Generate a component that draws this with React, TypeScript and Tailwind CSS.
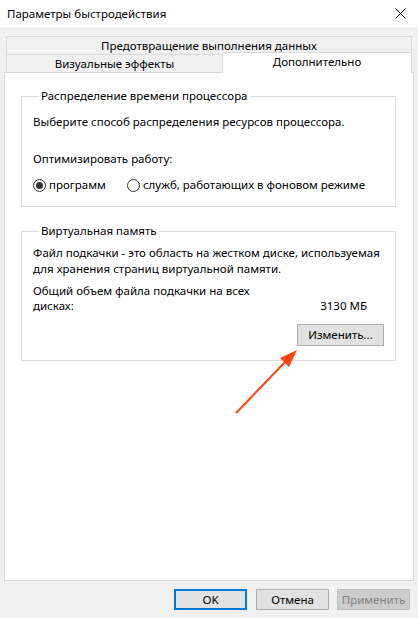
import React from "react";

const font = { fontFamily: '"Noto Sans", "Segoe UI", sans-serif' };

function Radio({ checked }: { checked?: boolean }) {
  return (
    <span className="w-[13px] h-[13px] rounded-full border border-[#333] bg-white flex items-center justify-center shrink-0">
      {checked && <span className="w-[7px] h-[7px] rounded-full bg-[#333]" />}
    </span>
  );
}

export default function App() {
  return (
    <div
      className="w-[418px] h-[618px] bg-[#f0f0f0] text-[11.5px] leading-[16px] text-black flex flex-col overflow-hidden"
      style={font}
    >
      {/* Title bar */}
      <div className="h-[27px] bg-white flex items-center justify-between pl-[7px] pr-[12px] shrink-0">
        <span className="text-[11.5px]">Параметры быстродействия</span>
        <svg width="11" height="11" viewBox="0 0 11 11">
          <path d="M0.5 0.5 L10.5 10.5 M10.5 0.5 L0.5 10.5" stroke="#000" strokeWidth="1" />
        </svg>
      </div>

      <div className="px-[4px] pt-[9px] flex flex-col">
        {/* Tabs */}
        <div className="mx-[2px] h-[18px] border border-b-0 border-[#d9d9d9] bg-[#f0f0f0] flex items-center justify-center">
          Предотвращение выполнения данных
        </div>
        <div className="mx-[2px] flex h-[18px] relative z-10">
          <div className="w-[217px] h-[18px] border border-b-0 border-[#d9d9d9] bg-[#f0f0f0] flex items-center justify-center">
            Визуальные эффекты
          </div>
          <div className="flex-1 -mt-[2px] h-[21px] border border-b-0 border-l-0 border-[#d9d9d9] bg-white flex items-center justify-center pb-[3px]">
            Дополнительно
          </div>
        </div>

        {/* Panel */}
        <div className="h-[509px] border border-[#d9d9d9] bg-white px-[16px] pt-[15px] flex flex-col">
          <fieldset className="border border-[#dcdcdc] px-[11px] pb-[13px] w-[375px]">
            <legend className="ml-[6px] px-[2px] leading-[16px]">Распределение времени процессора</legend>
            <div className="pt-[10px] whitespace-nowrap">Выберите способ распределения ресурсов процессора.</div>
            <div className="mt-[21px]">Оптимизировать работу:</div>
            <div className="mt-[10px] flex items-center whitespace-nowrap">
              <Radio checked />
              <span className="ml-[3px]">программ</span>
              <span className="ml-[21px]">
                <Radio />
              </span>
              <span className="ml-[3px]">служб, работающих в фоновом режиме</span>
            </div>
          </fieldset>

          <fieldset className="mt-[16px] border border-[#dcdcdc] px-[11px] pb-[14px] w-[375px]">
            <legend className="ml-[6px] px-[2px] leading-[16px]">Виртуальная память</legend>
            <div className="pt-[6px] whitespace-nowrap">
              Файл подкачки - это область на жестком диске, используемая
              <br />
              для хранения страниц виртуальной памяти.
            </div>
            <div className="mt-[6px] flex justify-between leading-[15px]">
              <div className="w-[230px]">Общий объем файла подкачки на всех дисках:</div>
              <div className="self-end pr-[17px]">3130 МБ</div>
            </div>
            <div className="mt-[11px] flex justify-end">
              <div className="w-[87px] h-[22px] border border-[#adadad] bg-[#e1e1e1] flex items-center justify-center">
                Изменить...
              </div>
            </div>
          </fieldset>
        </div>

        {/* Bottom buttons */}
        <div className="mt-[8px] flex justify-end pr-[4px]">
          <div className="w-[73px] h-[21px] border-2 border-[#0078d7] bg-[#e1e1e1] flex items-center justify-center">
            OK
          </div>
          <div className="ml-[9px] w-[73px] h-[21px] border border-[#adadad] bg-[#e1e1e1] flex items-center justify-center">
            Отмена
          </div>
          <div className="ml-[8px] w-[73px] h-[21px] border border-[#bfbfbf] bg-[#cccccc] text-[#838383] flex items-center justify-center">
            Применить
          </div>
        </div>
      </div>

      {/* Annotation arrow */}
      <svg className="absolute left-0 top-0 pointer-events-none" width="418" height="618">
        <line x1="236.5" y1="412.5" x2="286" y2="361" stroke="#ff4515" strokeWidth="2" strokeLinecap="round" />
        <polygon points="297,350 280,358 289,367" fill="#ff4515" />
      </svg>
    </div>
  );
}
